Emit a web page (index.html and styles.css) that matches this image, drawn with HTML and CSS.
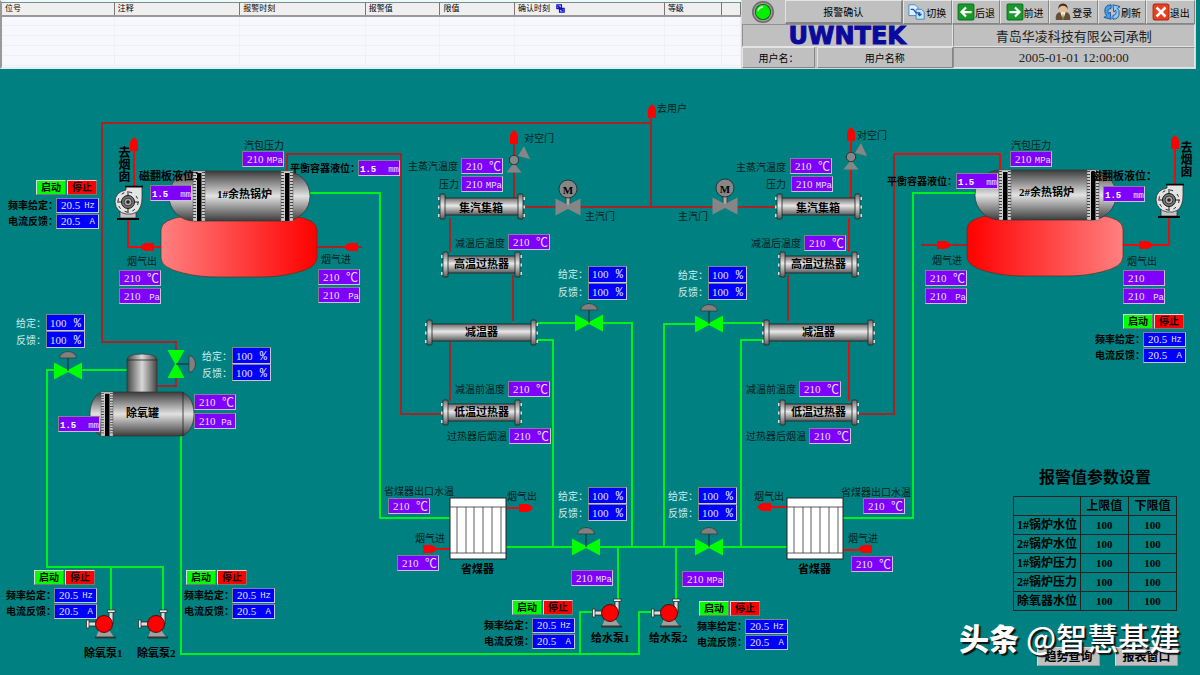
FILE: index.html
```html
<!DOCTYPE html>
<html lang="zh-CN">
<head>
<meta charset="utf-8">
<title>余热锅炉监控</title>
<link rel="stylesheet" href="styles.css">
</head>
<body>
<header class="top">
  <div class="alarms">
    <table class="alarm-table">
      <colgroup><col class="c-tag"><col class="c-wide"><col class="c-wide"><col class="c-narrow"><col class="c-narrow"><col class="c-ack"><col class="c-level"><col class="c-rest"></colgroup>
      <thead><tr><th>位号</th><th>注释</th><th>报警时刻</th><th>报警值</th><th>限值</th><th>确认时刻
        <svg class="sort" viewBox="0 0 10 10"><path d="M1 1h5v4H1zM4 5h5v4H4z" fill="#fff" stroke="#11c" stroke-width="1.5"/><path d="M2 2l6 6" stroke="#11c" stroke-width="2"/></svg></th><th>等级</th><th></th></tr></thead>
      <tbody>
        <tr><td></td><td></td><td></td><td></td><td></td><td></td><td></td><td></td></tr>
        <tr><td></td><td></td><td></td><td></td><td></td><td></td><td></td><td></td></tr>
        <tr><td></td><td></td><td></td><td></td><td></td><td></td><td></td><td></td></tr>
        <tr><td></td><td></td><td></td><td></td><td></td><td></td><td></td><td></td></tr>
        <tr><td></td><td></td><td></td><td></td><td></td><td></td><td></td><td></td></tr>
      </tbody>
    </table>
  </div>
  <div class="panel">
    <div class="toolbar">
      <div class="lamp"><svg viewBox="0 0 24 24"><circle cx="12" cy="12" r="11" fill="#6b6b6b"/><circle cx="12" cy="12" r="9.5" fill="#9a9a9a"/><circle cx="12" cy="12" r="8" fill="#0a5a0a"/><circle cx="12" cy="12" r="7.2" fill="#00f000"/><path d="M7 11q1-4 5-4" fill="none" stroke="#d8ffd8" stroke-width="1.3"/></svg></div>
      <button class="key ack">报警确认</button>
      <button class="key"><svg viewBox="0 0 20 20"><path d="M1 2h7l3 3v9H1z" fill="#dff1ff" stroke="#3b86c0"/><path d="M9 7h6l3 3v8H9z" fill="#c4e6fb" stroke="#3b86c0"/><path d="M3 7h3l3 4h4v3m-2-2 2 2 2-2" fill="none" stroke="#2448b8" stroke-width="1.3"/></svg>切换</button>
      <button class="key"><svg viewBox="0 0 16 16"><rect x="1" y="1" width="14" height="14" rx="1" fill="#179a2b" stroke="#0b7420"/><path d="M13 8H4m4-4-4 4 4 4" fill="none" stroke="#fff" stroke-width="2"/></svg>后退</button>
      <button class="key"><svg viewBox="0 0 16 16"><rect x="1" y="1" width="14" height="14" rx="1" fill="#179a2b" stroke="#0b7420"/><path d="M3 8h9M8 4l4 4-4 4" fill="none" stroke="#fff" stroke-width="2"/></svg>前进</button>
      <button class="key"><svg viewBox="0 0 18 20"><path d="M1 19q-1-8 5-9h6q6 1 5 9z" fill="#6b4b35"/><path d="M6 10l3 9 3-9z" fill="#f4efe4"/><path d="M9 11l-1 6 1 2 1-2z" fill="#3c8a3c"/><circle cx="9" cy="6" r="4.4" fill="#e8bd92"/><path d="M4 7q-1-6 5-6.500 6 .5 5 6.500-1-4-5-4t-5 4z" fill="#4a2d18"/></svg>登录</button>
      <button class="key"><svg viewBox="0 0 20 18"><path d="M9 1Q2 1 2 8q0 3 2 5l-3 2 8 2-1-8-2 2q-2-5 3-6z" fill="#3fa2e6" stroke="#1a4f9c"/><path d="M11 17q7 0 7-7 0-3-2-5l3-2-8-2 1 8 2-2q2 5-3 6z" fill="#8cc9f4" stroke="#1a4f9c"/></svg>刷新</button>
      <button class="key"><svg viewBox="0 0 16 16"><rect x="1" y="1" width="14" height="14" rx="2" fill="#e8401c" stroke="#b82a10"/><path d="M4 4l8 8M12 4l-8 8" stroke="#fff" stroke-width="2.200"/></svg>退出</button>
    </div>
    <div class="info">
      <div class="cell logo">UWNTEK</div>
      <div class="cell company">青岛华凌科技有限公司承制</div>
      <div class="user"><div class="cell raised">用户名：</div><div class="cell raised">用户名称</div></div>
      <time class="cell clock">2005-01-01 12:00:00</time>
    </div>
  </div>
</header>

<main>
<svg class="plant" viewBox="0 69 1200 606">
  <defs>
    <linearGradient id="steel" x2="0" y2="1"><stop offset="0" stop-color="#3c3c3c"/><stop offset=".5" stop-color="#e2e2e2"/><stop offset="1" stop-color="#3c3c3c"/></linearGradient>
    <linearGradient id="tube" x2="0" y2="1"><stop offset="0" stop-color="#6a6a6a"/><stop offset=".45" stop-color="#e8e8e8"/><stop offset="1" stop-color="#5a5a5a"/></linearGradient>
    <linearGradient id="neck"><stop offset="0" stop-color="#444"/><stop offset=".5" stop-color="#d8d8d8"/><stop offset="1" stop-color="#444"/></linearGradient>
    <linearGradient id="fire"><stop offset="0" stop-color="#ff8080"/><stop offset="1" stop-color="#ff0000"/></linearGradient>
    <linearGradient id="fire2"><stop offset="0" stop-color="#ff0000"/><stop offset="1" stop-color="#ff8080"/></linearGradient>
    <g id="tag"><rect width="42" height="16" fill="#c9c4de"/><path d="M0 16V0h42l-1 1H1v14z" fill="#85808f"/><rect x="1" y="1" width="40" height="14" fill="#8000ff"/></g>
    <g id="pct"><rect width="39" height="17" fill="#c4c8dc"/><path d="M0 17V0h39l-1 1H1v15z" fill="#80848f"/><rect x="1" y="1" width="37" height="15" fill="#0000ff"/></g>
    <path id="arrow" d="M0 0l3 3 1 3v8h-3l-1-1-1 1h-3V6L-3 3z" fill="#f00"/>
    <g id="strap"><rect width="12" height="50" fill="#ccc" stroke="#666" stroke-width=".5"/><path d="M1.500 1v48M10.500 1v48" stroke="#444" stroke-dasharray="1 2" stroke-width="3"/><rect x="4" y="2" width="4.500" height="48" fill="#000"/></g>
    <g id="drum"><rect width="141" height="50" rx="25" ry="27" fill="url(#steel)" stroke="#333" stroke-width=".7"/><use href="#strap" x="24"/><use href="#strap" x="112"/></g>
    <path id="furnace" d="M25 0H131q25 3 25 14v28q0 10-22 15-15 4-35 4H57q-20 0-35-4Q0 52 0 42V14Q0 3 25 0z" stroke="#532" stroke-width=".7"/>
    <g id="flange"><path d="M-1 3v3M-1 11.500v3M-1 20v3" stroke="#ddd" stroke-width="2"/><rect width="5" height="25" rx="1" fill="url(#tube)" stroke="#222" stroke-width=".8"/></g>
    <g id="flange-r"><path d="M6 3v3M6 11.500v3M6 20v3" stroke="#ddd" stroke-width="2"/><rect width="5" height="25" rx="1" fill="url(#tube)" stroke="#222" stroke-width=".8"/></g>
    <g id="tube-m"><rect x="4" y="4" width="76" height="17" fill="url(#tube)" stroke="#222" stroke-width=".8"/><use href="#flange"/><use href="#flange-r" x="78"/></g>
    <g id="tube-s"><rect x="4" y="4" width="70" height="17" fill="url(#tube)" stroke="#222" stroke-width=".8"/><use href="#flange"/><use href="#flange-r" x="72"/></g>
    <g id="tube-l"><rect x="4" y="4" width="102" height="17" fill="url(#tube)" stroke="#222" stroke-width=".8"/><use href="#flange"/><use href="#flange-r" x="104"/></g>
    <g id="valve"><path d="M-14-8.500L0-1l14-7.500v17L0 1l-14 7.500z" fill="#0f0"/><path d="M0 0v-13" stroke="#222"/><path d="M-8.500-13q1-6 8.500-6.500 7.500.5 8.500 6.500z" fill="#808080" stroke="#333" stroke-width=".7"/></g>
    <g id="mvalve"><path d="M-2-10h4v9h-4z" fill="#aaa" stroke="#333" stroke-width=".8"/><path d="M-12.500-8.500L0-2l12.500-6.500v17L0 2l-12.500 6.500z" fill="#868686"/><circle cy="-18" r="9" fill="#868686" stroke="#222" stroke-width=".8"/></g>
    <g id="safety"><path d="M10-14l6 13-12-3zM-7.500 12.500L0 3l7.500 9.500z" fill="#868686"/><circle r="4.700" fill="#868686" stroke="#222" stroke-width=".8"/></g>
    <g id="fan"><path d="M-8 8h16v8H-8z" fill="#c4c4c4" stroke="#222" stroke-width=".7"/><path d="M-11 17H11" stroke="#000" stroke-width="2"/><path d="M-2-15H14V-4Q14 5 9 10 4 13-2 12-12 10-13 0-13-10-2-12z" fill="#e4e4e4" stroke="#333" stroke-width=".8"/><path d="M-3-15.500h18" stroke="#000" stroke-width="1.500"/><circle r="10" fill="none" stroke="#222" stroke-dasharray="3 5"/><circle r="6.500" fill="#777" stroke="#111"/><circle r="4" fill="#aaa" stroke="#222" stroke-width=".8"/><circle r="1.800" fill="#222"/><path d="M-11 0h4M7 0h4M0-11v4M0 7v4" stroke="#222"/></g>
    <g id="pump"><path d="M-5 6L-8 13H10L5 6z" fill="#a0a0a0"/><path d="M-9 13.500H12" stroke="#333" stroke-width="2"/><path d="M-16-2h9v4h-9zM5-12h4V0H5z" fill="#ddd" stroke="#222" stroke-width=".8"/><path d="M-17.500-4h2.500v8h-2.500zM3.500-14h7.500v2.500H3.500z" fill="#eee" stroke="#222" stroke-width=".7"/><circle r="8.500" fill="#f00" stroke="#300" stroke-width=".8"/></g>
    <g id="eco"><rect width="56" height="61" fill="#fff" stroke="#222"/><path d="M0 9h56M0 55h56M7 9v46M16 9v46M24 9v46M33 9v46M42 9v46M51 9v46" fill="none" stroke="#333" stroke-width=".8"/></g>
  </defs>

  <g class="pipe steam">
    <path d="M651 118v89M651 123H102V342h74v8M176 378v8H156M287 172V154H401V414h43M514 143v56M523 207H778M450 218v34M513 275v46M450 342v59"/>
    <path d="M788 275v46M857 414h37V154M945 245h22M921 245h20M316 247h46"/>
  </g>
  <g class="pipe hot">
    <path d="M894 154H1000V171M851 140v58M849 218v34M849 342v59M161 247H128V218M134 150v37M1122 245h47V216M1175 147v38M506 508h15M425 549h26M843 550h16M768 507h20"/>
  </g>
  <g class="pipe water">
    <path d="M310 193h70V518h71M975 193H913V518H842"/>
    <path d="M537 323h40M602 323h30V547M537 340h16V547M764 323h-42M696 324h-32V547M764 340h-23V547"/>
    <path d="M506 547h66M599 547h97M722 547h65M618 547v54M676 547v54"/>
    <path d="M181 436V654H639V612H653M580 654V612H594M127 370H81M55 370H47V567H163V612M111 567v45"/>
  </g>

  <use href="#arrow" x="652" y="104"/><use href="#arrow" x="134" y="137"/><use href="#arrow" x="514" y="130"/><use href="#arrow" x="851" y="127"/><use href="#arrow" x="1175" y="135"/>
  <use href="#arrow" transform="translate(140 247) rotate(-90)"/><use href="#arrow" transform="translate(344 247) rotate(-90)"/>
  <use href="#arrow" transform="translate(951 245) rotate(90)"/><use href="#arrow" transform="translate(1153 245) rotate(90)"/>
  <use href="#arrow" transform="translate(533 508) rotate(90)"/><use href="#arrow" transform="translate(437 549) rotate(90)"/>
  <use href="#arrow" transform="translate(757 507) rotate(-90)"/><use href="#arrow" transform="translate(858 549) rotate(-90)"/>

  <use href="#furnace" x="161" y="216" fill="url(#fire)"/><use href="#furnace" x="967" y="215" fill="url(#fire2)"/>
  <use href="#drum" x="169" y="171"/><use href="#drum" x="975" y="170"/>
  <path d="M127 396V360q0-6 15-6t15 6v36z" fill="url(#neck)" stroke="#333" stroke-width=".7"/><path d="M127 360h30" stroke="#222" stroke-width=".8"/>
  <rect x="90" y="392" width="104" height="44" rx="14" ry="22" fill="url(#steel)" stroke="#333" stroke-width=".7"/><path d="M183 392v44" stroke="#222" stroke-width=".8"/>
  <use href="#strap" transform="translate(101 392) scale(1 .88)"/>
  <use href="#tube-m" x="440" y="194"/><use href="#tube-s" x="443" y="252"/><use href="#tube-l" x="427" y="320"/><use href="#tube-s" x="443" y="400"/>
  <use href="#tube-m" x="777" y="194"/><use href="#tube-s" x="780" y="252"/><use href="#tube-l" x="764" y="320"/><use href="#tube-s" x="780" y="400"/>
  <use href="#valve" x="68" y="371"/><use href="#valve" x="589" y="323"/><use href="#valve" x="709" y="324"/><use href="#valve" x="586" y="547"/><use href="#valve" x="709" y="547"/>
  <use href="#valve" transform="translate(176 364) rotate(90)"/>
  <use href="#mvalve" x="568" y="207"/><use href="#mvalve" x="725" y="206"/>
  <use href="#safety" x="514" y="160"/><use href="#safety" x="851" y="157"/>
  <use href="#fan" x="128" y="202"/><use href="#fan" x="1169" y="200"/>
  <use href="#pump" x="104" y="624"/><use href="#pump" x="156" y="624"/><use href="#pump" x="610" y="613"/><use href="#pump" x="669" y="613"/>
  <use href="#eco" x="450" y="498"/><use href="#eco" x="787" y="498"/>

  <g class="motor-mark"><text x="568" y="194">M</text><text x="725" y="193">M</text></g>

  <g class="note">
    <text x="244" y="149">汽包压力</text><text x="524" y="142">对空门</text><text x="657" y="112">去用户</text>
    <text x="408" y="170">主蒸汽温度</text><text x="439" y="188">压力</text><text x="585" y="220">主汽门</text><text x="455" y="247">减温后温度</text>
    <text x="857" y="139">对空门</text><text x="736" y="171">主蒸汽温度</text><text x="766" y="188">压力</text><text x="678" y="220">主汽门</text><text x="751" y="247">减温后温度</text>
    <text x="1011" y="149">汽包压力</text><text x="932" y="264">烟气进</text><text x="1127" y="265">烟气出</text><text x="127" y="265">烟气出</text><text x="321" y="263">烟气进</text>
    <text x="455" y="393">减温前温度</text><text x="447" y="440">过热器后烟温</text><text x="384" y="495">省煤器出口水温</text><text x="507" y="500">烟气出</text><text x="415" y="542">烟气进</text>
    <text x="746" y="393">减温前温度</text><text x="746" y="440">过热器后烟温</text><text x="754" y="500">烟气出</text><text x="841" y="496">省煤器出口水温</text><text x="848" y="542">烟气进</text>
  </g>
  <g class="name">
    <text x="139" y="180">磁翻板液位：</text><text x="1091" y="180">磁翻板液位：</text>
    <text x="461" y="573">省煤器</text><text x="798" y="573">省煤器</text>
    <text x="84" y="657">除氧泵1</text><text x="137" y="657">除氧泵2</text><text x="591" y="642">给水泵1</text><text x="649" y="642">给水泵2</text>
    <text x="459" y="212">集汽集箱</text><text x="454" y="268">高温过热器</text><text x="465" y="336">减温器</text><text x="454" y="416">低温过热器</text>
    <text x="796" y="212">集汽集箱</text><text x="791" y="268">高温过热器</text><text x="802" y="336">减温器</text><text x="791" y="416">低温过热器</text>
    <text x="126" y="417">除氧罐</text><text x="217" y="198">1#余热锅炉</text><text x="1019" y="196">2#余热锅炉</text>
  </g>
  <g class="name level"><text x="290" y="172">平衡容器液位：</text><text x="887" y="185">平衡容器液位：</text></g>
  <g class="stack"><text x="123" y="146">去烟囱</text><text x="1185" y="141">去烟囱</text></g>

  <g class="readings">
    <g transform="translate(242 151)"><use href="#tag"/><text x="5" y="12">210</text><text class="unit" x="41" y="12">MPa</text></g>
    <g transform="translate(150 185)"><use href="#tag"/><text class="strong" x="2" y="12">1.5</text><text class="unit" x="41" y="12">mm</text></g>
    <g transform="translate(358 160)"><use href="#tag"/><text class="strong" x="2" y="12">1.5</text><text class="unit" x="41" y="12">mm</text></g>
    <g transform="translate(119 270)"><use href="#tag"/><text x="5" y="12">210</text><text class="unit deg" x="40" y="13">℃</text></g>
    <g transform="translate(119 288)"><use href="#tag"/><text x="5" y="12">210</text><text class="unit" x="41" y="12">Pa</text></g>
    <g transform="translate(318 269)"><use href="#tag"/><text x="5" y="12">210</text><text class="unit deg" x="40" y="13">℃</text></g>
    <g transform="translate(318 287)"><use href="#tag"/><text x="5" y="12">210</text><text class="unit" x="41" y="12">Pa</text></g>
    <g transform="translate(461 158)"><use href="#tag"/><text x="5" y="12">210</text><text class="unit deg" x="40" y="13">℃</text></g>
    <g transform="translate(461 176)"><use href="#tag"/><text x="5" y="12">210</text><text class="unit" x="41" y="12">MPa</text></g>
    <g transform="translate(508 234)"><use href="#tag"/><text x="5" y="12">210</text><text class="unit deg" x="40" y="13">℃</text></g>
    <g transform="translate(790 158)"><use href="#tag"/><text x="5" y="12">210</text><text class="unit deg" x="40" y="13">℃</text></g>
    <g transform="translate(791 176)"><use href="#tag"/><text x="5" y="12">210</text><text class="unit" x="41" y="12">MPa</text></g>
    <g transform="translate(804 235)"><use href="#tag"/><text x="5" y="12">210</text><text class="unit deg" x="40" y="13">℃</text></g>
    <g transform="translate(1010 151)"><use href="#tag"/><text x="5" y="12">210</text><text class="unit" x="41" y="12">MPa</text></g>
    <g transform="translate(956 173)"><use href="#tag"/><text class="strong" x="2" y="12">1.5</text><text class="unit" x="41" y="12">mm</text></g>
    <g transform="translate(1103 186)"><use href="#tag"/><text class="strong" x="2" y="12">1.5</text><text class="unit" x="41" y="12">mm</text></g>
    <g transform="translate(925 270)"><use href="#tag"/><text x="5" y="12">210</text><text class="unit deg" x="40" y="13">℃</text></g>
    <g transform="translate(925 288)"><use href="#tag"/><text x="5" y="12">210</text><text class="unit" x="41" y="12">Pa</text></g>
    <g transform="translate(1123 270)"><use href="#tag"/><text x="5" y="12">210</text></g>
    <g transform="translate(1123 288)"><use href="#tag"/><text x="5" y="12">210</text><text class="unit" x="41" y="12">Pa</text></g>
    <g transform="translate(194 394)"><use href="#tag"/><text x="5" y="12">210</text><text class="unit deg" x="40" y="13">℃</text></g>
    <g transform="translate(194 413)"><use href="#tag"/><text x="5" y="12">210</text><text class="unit" x="38" y="12">Pa</text></g>
    <g transform="translate(58 416)"><use href="#tag"/><text class="strong" x="2" y="12">1.5</text><text class="unit" x="41" y="12">mm</text></g>
    <g transform="translate(508 381)"><use href="#tag"/><text x="5" y="12">210</text><text class="unit deg" x="40" y="13">℃</text></g>
    <g transform="translate(509 428)"><use href="#tag"/><text x="5" y="12">210</text><text class="unit deg" x="40" y="13">℃</text></g>
    <g transform="translate(388 498)"><use href="#tag"/><text x="5" y="12">210</text><text class="unit deg" x="40" y="13">℃</text></g>
    <g transform="translate(397 555)"><use href="#tag"/><text x="5" y="12">210</text><text class="unit deg" x="40" y="13">℃</text></g>
    <g transform="translate(571 570)"><use href="#tag"/><text x="5" y="12">210</text><text class="unit" x="41" y="12">MPa</text></g>
    <g transform="translate(799 381)"><use href="#tag"/><text x="5" y="12">210</text><text class="unit deg" x="40" y="13">℃</text></g>
    <g transform="translate(809 428)"><use href="#tag"/><text x="5" y="12">210</text><text class="unit deg" x="40" y="13">℃</text></g>
    <g transform="translate(863 498)"><use href="#tag"/><text x="5" y="12">210</text><text class="unit deg" x="40" y="13">℃</text></g>
    <g transform="translate(851 556)"><use href="#tag"/><text x="5" y="12">210</text><text class="unit deg" x="40" y="13">℃</text></g>
    <g transform="translate(682 571)"><use href="#tag"/><text x="5" y="12">210</text><text class="unit" x="41" y="12">MPa</text></g>
  </g>

  <g class="readings setpoints">
    <g transform="translate(46 314)"><use href="#pct"/><use href="#pct" y="17"/><text class="cap" x="-30" y="13">给定：</text><text x="4" y="13">100</text><text class="unit" x="35" y="13">%</text><text class="cap" x="-30" y="30">反馈：</text><text x="4" y="30">100</text><text class="unit" x="35" y="30">%</text></g>
    <g transform="translate(232 347)"><use href="#pct"/><use href="#pct" y="17"/><text class="cap" x="-30" y="13">给定：</text><text x="4" y="13">100</text><text class="unit" x="35" y="13">%</text><text class="cap" x="-30" y="30">反馈：</text><text x="4" y="30">100</text><text class="unit" x="35" y="30">%</text></g>
    <g transform="translate(588 266)"><use href="#pct"/><use href="#pct" y="17"/><text class="cap" x="-30" y="12">给定：</text><text x="4" y="12">100</text><text class="unit" x="35" y="12">%</text><text class="cap" x="-30" y="30">反馈：</text><text x="4" y="30">100</text><text class="unit" x="35" y="30">%</text></g>
    <g transform="translate(708 266)"><use href="#pct"/><use href="#pct" y="17"/><text class="cap" x="-30" y="13">给定：</text><text x="4" y="13">100</text><text class="unit" x="35" y="13">%</text><text class="cap" x="-30" y="30">反馈：</text><text x="4" y="30">100</text><text class="unit" x="35" y="30">%</text></g>
    <g transform="translate(588 487)"><use href="#pct"/><use href="#pct" y="17"/><text class="cap" x="-30" y="13">给定：</text><text x="4" y="13">100</text><text class="unit" x="35" y="13">%</text><text class="cap" x="-30" y="30">反馈：</text><text x="4" y="30">100</text><text class="unit" x="35" y="30">%</text></g>
    <g transform="translate(698 487)"><use href="#pct"/><use href="#pct" y="17"/><text class="cap" x="-30" y="13">给定：</text><text x="4" y="13">100</text><text class="unit" x="35" y="13">%</text><text class="cap" x="-30" y="30">反馈：</text><text x="4" y="30">100</text><text class="unit" x="35" y="30">%</text></g>
  </g>

  <foreignObject x="8" y="180" width="91" height="52"><div class="motor"><div class="keys"><button class="start">启动</button><button class="stop">停止</button></div><div class="row"><span>频率给定：</span><output>20.5 <i>Hz</i></output></div><div class="row"><span>电流反馈：</span><output>20.5 <i>A</i></output></div></div></foreignObject>
  <foreignObject x="6" y="570" width="91" height="52"><div class="motor"><div class="keys"><button class="start">启动</button><button class="stop">停止</button></div><div class="row"><span>频率给定：</span><output>20.5 <i>Hz</i></output></div><div class="row"><span>电流反馈：</span><output>20.5 <i>A</i></output></div></div></foreignObject>
  <foreignObject x="184" y="570" width="91" height="52"><div class="motor"><div class="keys left"><button class="start">启动</button><button class="stop">停止</button></div><div class="row"><span>频率给定：</span><output>20.5 <i>Hz</i></output></div><div class="row"><span>电流反馈：</span><output>20.5 <i>A</i></output></div></div></foreignObject>
  <foreignObject x="484" y="600" width="91" height="52"><div class="motor"><div class="keys"><button class="start">启动</button><button class="stop">停止</button></div><div class="row"><span>频率给定：</span><output>20.5 <i>Hz</i></output></div><div class="row"><span>电流反馈：</span><output>20.5 <i>A</i></output></div></div></foreignObject>
  <foreignObject x="697" y="601" width="91" height="52"><div class="motor"><div class="keys left"><button class="start">启动</button><button class="stop">停止</button></div><div class="row"><span>频率给定：</span><output>20.5 <i>Hz</i></output></div><div class="row"><span>电流反馈：</span><output>20.5 <i>A</i></output></div></div></foreignObject>
  <foreignObject x="1095" y="314" width="91" height="52"><div class="motor"><div class="keys"><button class="start">启动</button><button class="stop">停止</button></div><div class="row"><span>频率给定：</span><output>20.5 <i>Hz</i></output></div><div class="row"><span>电流反馈：</span><output>20.5 <i>A</i></output></div></div></foreignObject>

  <foreignObject x="1013" y="468" width="164" height="148">
    <table class="limits">
      <caption>报警值参数设置</caption>
      <thead><tr><th></th><th>上限值</th><th>下限值</th></tr></thead>
      <tbody>
        <tr><th>1#锅炉水位</th><td>100</td><td>100</td></tr>
        <tr><th>2#锅炉水位</th><td>100</td><td>100</td></tr>
        <tr><th>1#锅炉压力</th><td>100</td><td>100</td></tr>
        <tr><th>2#锅炉压力</th><td>100</td><td>100</td></tr>
        <tr><th>除氧器水位</th><td>100</td><td>100</td></tr>
      </tbody>
    </table>
  </foreignObject>
  <foreignObject x="1037" y="647" width="141" height="20"><div class="links"><button>趋势查询</button><button>报表窗口</button></div></foreignObject>
  <g class="credit"><text class="brand" x="959" y="650">头条</text><text x="1026" y="650">@智慧基建</text></g>
</svg>
</main>
</body>
</html>
```
FILE: styles.css
```css
* { box-sizing: border-box; }
body {
  margin: 0;
  background: #008080;
  color: #000;
  font-family: "Liberation Serif", "Noto Sans CJK SC", serif;
}
button { font-family: inherit; padding: 0; margin: 0; cursor: pointer; }

.top { display: grid; grid-template-columns: 741fr 459fr; }

.alarms { background: #f7f8fd; border-left: 2px solid #999; border-top: 2px solid #e8fbfb; border-bottom: 2px solid #dfeeee; }
.alarm-table { width: 100%; border-collapse: collapse; table-layout: fixed; }
.alarm-table th {
  height: 13px; padding: 0 0 0 3px;
  background: #efefef;
  border-right: 1px solid #777; border-bottom: 2px solid #999; border-top: 1px solid #888;
  font-size: 8px; line-height: 10px; font-weight: 400; text-align: left; white-space: nowrap;
}
.alarm-table td { height: 10px; padding: 0; border-right: 1px solid #eef0f4; border-bottom: 1px solid #eef0f4; }
.sort { width: 9px; height: 9px; margin-left: 4px; vertical-align: middle; }
.c-tag { width: 15.2%; }
.c-wide { width: 17%; }
.c-narrow { width: 10.1%; }
.c-ack { width: 20.3%; }
.c-level { width: 7.7%; }

.panel { display: flex; flex-direction: column; margin-right: 4px; background: #c0c0c0; border: 1px solid #d8d8d8; border-top: 0; }
.toolbar { display: grid; grid-template-columns: 43fr 119fr repeat(6, 49fr); height: 24px; }
.lamp { display: flex; justify-content: center; align-items: center; }
.lamp svg { width: 24px; height: 24px; }
.key {
  display: flex; justify-content: center; align-items: center;
  background: #c0c0c0; border: 1px solid; border-color: #e4e4e4 #858585 #858585 #e4e4e4;
  font-size: 10px; white-space: nowrap;
}
.key svg { width: 18px; height: 18px; flex: none; }
.ack { border-width: 1px 2px 2px 1px; }
.info { display: grid; grid-template-columns: 211fr 243fr; grid-template-rows: 23px 21px; }
.cell { display: flex; justify-content: center; align-items: center; border: 1px solid; border-color: #909090 #e4e4e4 #e4e4e4 #909090; white-space: nowrap; }
.logo { font: 700 24px/20px "DejaVu Sans", sans-serif; color: #0a0a9c; -webkit-text-stroke: 1px #0a0a9c; }
.company, .clock { font-size: 13px; color: #222; }
.user { display: grid; grid-template-columns: 73fr 136fr; gap: 2px; font-size: 10px; }
.raised { border-color: #e4e4e4 #858585 #858585 #e4e4e4; }

.plant { display: block; width: 100%; height: auto; }
.pipe { fill: none; stroke-width: 2; }
.steam { stroke: #a82424; }
.hot { stroke: #e80c0c; }
.water { stroke: #00f01c; }

.note { font-size: 10px; fill: #062020; }
.name { font-size: 11px; font-weight: 700; }
.level { font-size: 10px; }
.stack { font-size: 12px; font-weight: 700; writing-mode: vertical-rl; }
.motor-mark { font-size: 11px; font-weight: 700; text-anchor: middle; }

.readings { font-size: 11px; fill: #e6e0f4; }
.unit { font-family: "Liberation Mono", "Noto Sans CJK SC", monospace; font-size: 9px; text-anchor: end; }
.deg { font-size: 12px; }
.strong { font: 700 9px "Liberation Mono", monospace; fill: #fff; }
.cap { font-size: 10px; fill: #d4ecec; }
.setpoints .unit { font-size: 12px; }

.motor { display: flex; flex-direction: column; gap: 1px; }
.keys { display: flex; justify-content: flex-end; gap: 1px; padding: 0 2px 2px 2px; }
.keys.left { justify-content: flex-start; }
.keys button { width: 30px; height: 15px; border: 1px solid; border-color: #d8d8d8 #777 #777 #d8d8d8; font-size: 10px; line-height: 12px; font-weight: 700; color: #000; }
.start { background: #0f0; }
.stop { background: #f00; }
.row { display: grid; grid-template-columns: 48px 1fr; height: 15px; align-items: center; font-size: 11px; line-height: 15px; font-weight: 700; white-space: nowrap; }
.row span { font-size: 10px; }
.row output {
  display: flex; justify-content: space-between; align-items: center;
  height: 15px; padding: 0 3px 0 4px;
  background: #00f; border: 1px solid; border-color: #80848f #c4c8dc #c4c8dc #80848f;
  color: #e4e4f4; font-weight: 400;
}
.row i { font: 9px "Liberation Mono", monospace; }

.limits { width: 100%; border-collapse: collapse; table-layout: fixed; font-weight: 700; }
.limits caption { height: 28px; font-size: 16px; line-height: 20px; white-space: nowrap; }
.limits th, .limits td { height: 19px; padding: 0 1px; border: 1px solid #222; font-size: 12px; line-height: 16px; text-align: center; white-space: nowrap; }
.limits td { font-size: 11px; }
.limits th:first-child { width: 41%; }

.links { display: flex; justify-content: space-between; }
.links button { width: 63px; height: 19px; background: #c0c0c0; border: 1px solid; border-color: #d8d8d8 #999 #999 #d8d8d8; font-size: 12px; line-height: 16px; font-weight: 700; color: #000; }
.credit { font-family: "Noto Sans CJK SC", sans-serif; font-size: 31px; font-weight: 500; fill: #fff; text-shadow: 2px 2px 1px #111; pointer-events: none; }
.brand { font-size: 30px; font-weight: 900; }
```
